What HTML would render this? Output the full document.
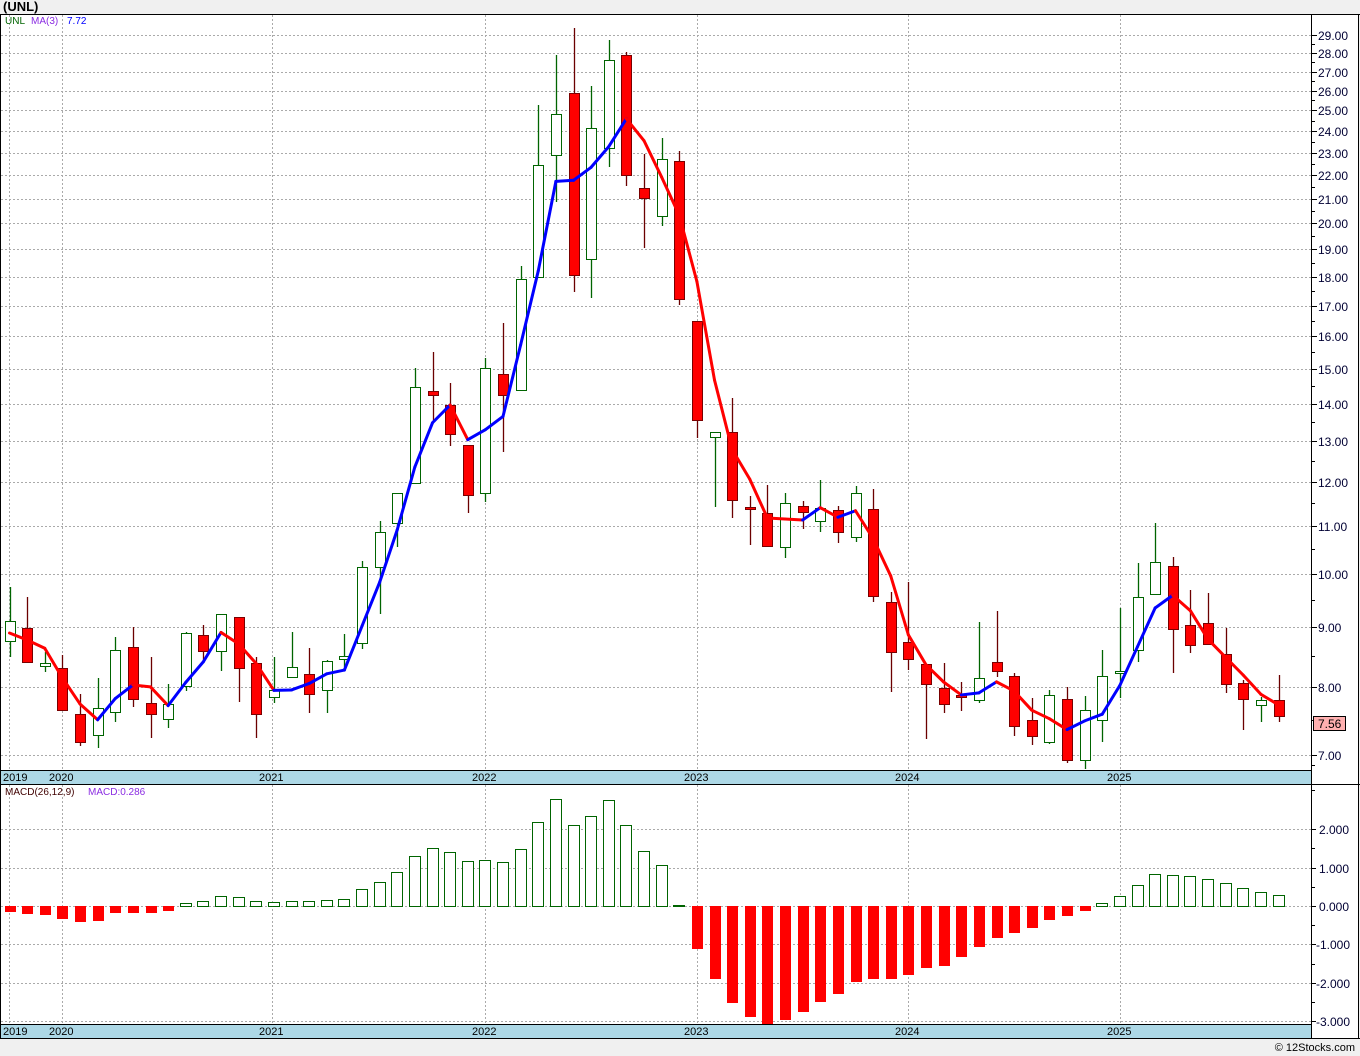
<!DOCTYPE html>
<html><head><meta charset="utf-8">
<style>
html,body{margin:0;padding:0;background:#f0f0f0;}
svg{display:block;font-family:"Liberation Sans",sans-serif;}
</style></head>
<body>
<svg id="s" width="1360" height="1056" xmlns="http://www.w3.org/2000/svg">
<rect x="0" y="0" width="1360" height="1056" fill="#f0f0f0"/>
<rect x="1" y="14" width="1357" height="1024" fill="#fff"/>
<text x="3" y="11" font-size="13" font-weight="bold" fill="#000">(UNL)</text>
<g id="grid"></g>
<g id="plot"></g>
<rect x="1" y="770" width="1310" height="14" fill="#add8e6"/>
<rect x="1" y="1024" width="1310" height="14" fill="#add8e6"/>
<g font-size="11" fill="#000">
<text x="3" y="781">2019</text><text x="49" y="781">2020</text><text x="259" y="781">2021</text><text x="472" y="781">2022</text><text x="684" y="781">2023</text><text x="895" y="781">2024</text><text x="1107" y="781">2025</text>
<text x="3" y="1035">2019</text><text x="49" y="1035">2020</text><text x="259" y="1035">2021</text><text x="472" y="1035">2022</text><text x="684" y="1035">2023</text><text x="895" y="1035">2024</text><text x="1107" y="1035">2025</text>
</g>
<line x1="0" y1="14.5" x2="1360" y2="14.5" stroke="#000"/>
<line x1="0" y1="770.5" x2="1311" y2="770.5" stroke="#000"/>
<line x1="0" y1="784.5" x2="1360" y2="784.5" stroke="#000"/>
<line x1="0" y1="1024.5" x2="1311" y2="1024.5" stroke="#000"/>
<line x1="0" y1="1038.5" x2="1360" y2="1038.5" stroke="#000"/>
<line x1="0.5" y1="14" x2="0.5" y2="1038" stroke="#000"/>
<line x1="1311.5" y1="14" x2="1311.5" y2="1038" stroke="#000"/>
<line x1="1358.5" y1="14" x2="1358.5" y2="1038" stroke="#000"/>
<g font-size="10">
<text x="5" y="24" fill="#006400">UNL</text><text x="31" y="24" fill="#6a0dad"><tspan fill="#8a2be2">MA(3)</tspan></text><text x="67" y="24" fill="#0000ff">7.72</text>
<text x="5" y="795" fill="#400000">MACD(26,12,9)</text><text x="88" y="795" fill="#8a2be2">MACD:0.286</text>
</g>
<g id="axis"></g>
<rect x="1313.5" y="716.5" width="32" height="14" fill="#ffb0b0" stroke="#000"/>
<text x="1318" y="728" font-size="12" fill="#000">7.56</text>
<text x="1355" y="1051" font-size="11" fill="#000" text-anchor="end">© 12Stocks.com</text>
</svg>
<script>
var NS="http://www.w3.org/2000/svg";
function el(p,t,a){var e=document.createElementNS(NS,t);for(var k in a)e.setAttribute(k,a[k]);p.appendChild(e);return e;}
var grid=document.getElementById('grid'),plot=document.getElementById('plot'),axis=document.getElementById('axis');
function yp(p){return 687-506*Math.log(p/8);}
[9.5,62.5,272.5,485.5,697.5,908.5,1120.5].forEach(function(x){
 el(grid,'line',{x1:x,y1:15,x2:x,y2:770,stroke:'#aaa','stroke-dasharray':'2,2'});
 el(grid,'line',{x1:x,y1:785,x2:x,y2:1024,stroke:'#aaa','stroke-dasharray':'2,2'});
});
for(var p=7;p<=29;p++){var y=Math.round(yp(p))+0.5;
 el(grid,'line',{x1:1,y1:y,x2:1311,y2:y,stroke:'#aaa','stroke-dasharray':'2,2'});
 el(axis,'line',{x1:1311,y1:y,x2:1317,y2:y,stroke:'#000'});
 var t=el(axis,'text',{x:1318,y:y+4.5,'font-size':12,fill:'#000033'});t.textContent=p.toFixed(2);
 var ym=Math.round(yp(p+0.5))+0.5; if(p<29) el(axis,'line',{x1:1311,y1:ym,x2:1315,y2:ym,stroke:'#000'});
}
el(axis,'line',{x1:1311,y1:765.5,x2:1315,y2:765.5,stroke:'#000'});
el(axis,'line',{x1:1311,y1:720.5,x2:1315,y2:720.5,stroke:'#000'});
[[2,'2.000'],[1,'1.000'],[0,'0.000'],[-1,'-1.000'],[-2,'-2.000'],[-3,'-3.000']].forEach(function(a){
 var y=Math.round(906-38.4*a[0])+0.5;
 el(grid,'line',{x1:1,y1:y,x2:1311,y2:y,stroke:'#aaa','stroke-dasharray':'2,2'});
 el(axis,'line',{x1:1311,y1:y,x2:1316,y2:y,stroke:'#000'});
 var ym=Math.round(906-38.4*(a[0]+0.5))+0.5; if(a[0]<2) el(axis,'line',{x1:1311,y1:ym,x2:1315,y2:ym,stroke:'#000'});
 var t=el(axis,'text',{x:a[0]<0?1316:1319,y:y+4.5,'font-size':12,fill:'#000033'});t.textContent=a[1];
});
el(axis,'line',{x1:1311,y1:790.5,x2:1315,y2:790.5,stroke:'#000'});
var C=[
[587,657,621,641,0],[597,662,628,662,1],[652,672,663,666,0],[655,710,668,710,1],[694,746,714,742,1],
[678,748,708,735,0],[637,722,650,712,0],[627,707,647,699,1],[657,738,703,714,1],[684,728,704,719,0],
[632,691,633,686,0],[625,661,635,651,1],[614,671,614,651,0],[617,702,617,668,1],[657,738,663,714,1],
[657,703,690,697,0],[632,677,667,677,0],[648,713,674,694,1],[660,713,661,690,0],[634,667,656,659,0],
[561,649,567,643,0],[521,614,532,567,0],[493,547,493,523,0],[368,483,387,483,0],[352,422,391,395,1],
[383,446,405,434,1],[445,513,445,495,1],[358,502,368,493,0],[323,452,374,395,1],[266,390,279,390,0],
[105,277,165,277,0],[55,202,114,155,0],[28,292,93,275,1],[86,298,128,259,0],[40,167,60,148,0],
[52,186,55,175,1],[154,248,188,198,1],[138,226,159,216,0],[151,305,161,299,1],[321,438,321,420,1],
[432,507,432,437,0],[398,518,432,500,1],[496,545,507,509,1],[485,547,513,546,1],[493,558,503,547,0],
[501,529,506,512,1],[480,532,508,521,0],[506,543,510,532,1],[486,542,493,537,0],[489,602,509,596,1],
[592,692,602,652,1],[582,670,642,659,1],[664,739,664,684,1],[663,713,688,704,1],[682,711,695,697,1],
[622,703,678,700,0],[611,677,662,671,1],[673,736,676,726,1],[698,745,720,736,1],[690,744,695,742,0],
[687,763,699,760,1],[696,769,710,760,0],[650,742,676,720,0],[608,698,671,673,0],[563,662,597,650,0],
[523,594,562,594,0],[557,673,566,629,1],[590,653,625,645,1],[593,644,623,644,1],[628,693,654,684,1],
[680,730,683,699,1],[697,722,700,705,0],[675,722,700,716,1]];
function X(i){return 9.5+17.625*i;}
var M=[912,914,915,919,922,921,913,913,913,911,903,901,896,897,901,902,901,901,900,899,889,882,872,856,848,852,861,860,862,849,822,799,825,816,800,825,851,865,905,949,979,1003,1017,1024,1020,1012,1002,994,982,979,979,975,968,966,957,947,938,933,928,920,916,911,903,896,885,874,875,876,879,883,888,892,895];
M.forEach(function(v,i){var x=Math.round(X(i))-5.5;
 if(v>906){el(plot,'rect',{x:x+0.5,y:906,width:11,height:v-906,fill:'#ff0000'});}
 else {el(plot,'rect',{x:x,y:v+0.5,width:11,height:Math.max(906-v,1),fill:'#fff',stroke:'#006400'});}
});
C.forEach(function(c,i){var x=Math.round(X(i))+0.5;
 var red=c[4];var wc=red?'#6b0000':'#006400';
 el(plot,'line',{x1:x,y1:c[0],x2:x,y2:c[1],stroke:wc,'stroke-width':1.3});
 var h=Math.max(c[3]-c[2],2);
 el(plot,'rect',{x:x-5,y:c[2]+0.5,width:10,height:h,fill:red?'#ff0000':'#fff',stroke:red?'#7a0000':'#006400'});
});
function pr(y){return 8*Math.exp((687-y)/506);}
var cl=C.map(function(c){return pr(c[4]?c[3]:c[2]);});
var ma=[];for(var i=0;i<C.length;i++){ if(i<2){ma.push(pr(i==0?633:640));} else ma.push((cl[i]+cl[i-1]+cl[i-2])/3);}
for(var i=1;i<ma.length;i++){
 el(plot,'line',{x1:X(i-1),y1:yp(ma[i-1]),x2:X(i),y2:yp(ma[i]),stroke:ma[i]>=ma[i-1]?'#0000ff':'#ff0000','stroke-width':3,'stroke-linecap':'round'});
}
</script>
</body></html>
